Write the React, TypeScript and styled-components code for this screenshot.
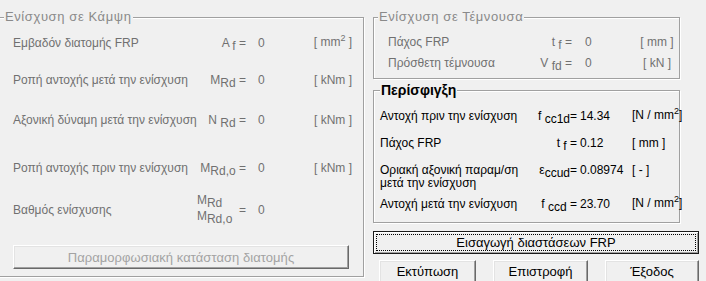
import React from "react";
import styled, { createGlobalStyle } from "styled-components";

const Global = createGlobalStyle`
  html, body { margin: 0; padding: 0; background: #f0f0f0; }
  body { font-family: "Liberation Sans", Arial, sans-serif; }
`;

const Window = styled.div`
  width: 706px;
  height: 281px;
  overflow: hidden;
  box-sizing: border-box;
  display: flex;
  align-items: flex-start;
  padding-top: 17px;
  background: #f0f0f0;
  font-family: "Liberation Sans", Arial, sans-serif;
  font-size: 12px;
`;

const Frame = styled.div<{ $w: number; $h: number; $ml?: number; $mt?: number; $pl: number }>`
  position: relative;
  box-sizing: border-box;
  flex: none;
  width: ${(p) => p.$w}px;
  height: ${(p) => p.$h}px;
  margin-left: ${(p) => p.$ml ?? 0}px;
  margin-top: ${(p) => p.$mt ?? 0}px;
  padding: 16px 0 0 ${(p) => p.$pl}px;
  border: 1px solid #a0a0a0;
  box-shadow: inset 1px 1px 0 #fff, 1px 1px 0 #fff;
  display: flex;
  flex-direction: column;
`;

const Caption = styled.span<{ $bold?: boolean; $left: number }>`
  position: absolute;
  left: ${(p) => p.$left}px;
  top: ${(p) => (p.$bold ? -9 : -8)}px;
  padding: 0 1px;
  background: #f0f0f0;
  white-space: nowrap;
  font-size: ${(p) => (p.$bold ? 14 : 13)}px;
  line-height: ${(p) => (p.$bold ? 16 : 14)}px;
  font-weight: ${(p) => (p.$bold ? 700 : 400)};
  letter-spacing: ${(p) => (p.$bold ? 0 : 0.6)}px;
  color: ${(p) => (p.$bold ? "#000" : "#8a8a8a")};
`;

const Row = styled.div<{ $cols: string; $mt?: number; $h?: number; $dim?: boolean; $top?: boolean }>`
  display: grid;
  grid-template-columns: ${(p) => p.$cols};
  align-items: ${(p) => (p.$top ? "start" : "center")};
  margin-top: ${(p) => p.$mt ?? 0}px;
  height: ${(p) => p.$h ?? 16}px;
  line-height: ${(p) => (p.$top ? 13 : 16)}px;
  white-space: nowrap;
  color: ${(p) => (p.$dim ? "#707070" : "#000")};
`;

const Label = styled.span``;

const Sym = styled.span`
  display: flex;
  justify-content: flex-end;
  align-items: center;
  white-space: pre;
`;

const Val = styled.span<{ $indent: number }>`
  padding-left: ${(p) => p.$indent}px;
`;

const Unit = styled.span<{ $center?: boolean }>`
  text-align: ${(p) => (p.$center ? "center" : "left")};
  white-space: pre;
`;

const Sub = styled.span`
  font-size: 12px;
  position: relative;
  top: 3px;
`;

const Sup = styled.span`
  font-size: 9px;
  position: relative;
  top: -5px;
`;

const Fraction = styled.span`
  display: inline-flex;
  flex-direction: column;
  line-height: 16px;
  margin-top: -4px;
`;

const RightCol = styled.div`
  flex: none;
  margin-left: 9px;
  width: 326px;
  display: flex;
  flex-direction: column;
`;

const DisabledButton = styled.div`
  box-sizing: border-box;
  margin-top: 19px;
  width: 336px;
  height: 24px;
  display: flex;
  align-items: center;
  justify-content: center;
  border: 1px solid;
  border-color: #fff #696969 #696969 #fff;
  box-shadow: inset -1px -1px 0 #a0a0a0, inset 1px 1px 0 #e3e3e3;
  color: #a3a3a3;
  font-size: 13px;
  letter-spacing: 0.05px;
  white-space: nowrap;
`;

const DefaultButton = styled.div`
  box-sizing: border-box;
  margin-top: 8px;
  width: 326px;
  height: 23px;
  padding: 2px;
  border: 1px solid #1a1a1a;
  box-shadow: inset 1px 1px 0 #fff, inset -1px -1px 0 #a0a0a0;
  display: flex;
`;

const FocusRect = styled.div`
  flex: 1;
  border: 1px dotted #000;
  display: flex;
  align-items: center;
  justify-content: center;
  font-size: 13px;
  color: #000;
  white-space: nowrap;
`;

const ButtonRow = styled.div`
  margin-top: 6px;
  padding-left: 6px;
  display: flex;
  gap: 17px;
`;

const PushButton = styled.div<{ $w: number }>`
  box-sizing: border-box;
  width: ${(p) => p.$w}px;
  height: 23px;
  display: flex;
  align-items: center;
  justify-content: center;
  border: 1px solid;
  border-color: #fff #696969 #696969 #fff;
  box-shadow: inset -1px -1px 0 #a0a0a0, inset 1px 1px 0 #e3e3e3;
  font-size: 13px;
  color: #000;
  white-space: nowrap;
`;

const LEFT_COLS = "182px 51px 59px 56px";
const SHEAR_COLS = "130px 54px 60px 50px";
const CONF_COLS = "152px 45px 55px auto";

export default function App() {
  return (
    <>
      <Global />
      <Window>
        <Frame $w={366} $h={260} $ml={-2} $pl={14}>
          <Caption $left={5}>Ενίσχυση σε Κάμψη</Caption>
          <Row $cols={LEFT_COLS} $dim>
            <Label>Εμβαδόν διατομής FRP</Label>
            <Sym>
              A <Sub>f</Sub> =
            </Sym>
            <Val $indent={12}>0</Val>
            <Unit $center>
              [ mm<Sup>2</Sup> ]
            </Unit>
          </Row>
          <Row $cols={LEFT_COLS} $dim $mt={22}>
            <Label>Ροπή αντοχής μετά την ενίσχυση</Label>
            <Sym>
              M<Sub>Rd</Sub> =
            </Sym>
            <Val $indent={12}>0</Val>
            <Unit $center>[ kNm ]</Unit>
          </Row>
          <Row $cols={LEFT_COLS} $dim $mt={24}>
            <Label>Αξονική δύναμη μετά την ενίσχυση</Label>
            <Sym>
              N <Sub>Rd</Sub> =
            </Sym>
            <Val $indent={12}>0</Val>
            <Unit $center>[ kNm ]</Unit>
          </Row>
          <Row $cols={LEFT_COLS} $dim $mt={32}>
            <Label>Ροπή αντοχής πριν την ενίσχυση</Label>
            <Sym>
              M<Sub>Rd,o</Sub> =
            </Sym>
            <Val $indent={12}>0</Val>
            <Unit $center>[ kNm ]</Unit>
          </Row>
          <Row $cols={LEFT_COLS} $dim $mt={18} $h={32}>
            <Label>Βαθμός ενίσχυσης</Label>
            <Sym>
              <Fraction>
                <span>
                  M<Sub>Rd</Sub>
                </span>
                <span>
                  M<Sub>Rd,o</Sub>
                </span>
              </Fraction>
              {"  ="}
            </Sym>
            <Val $indent={12}>0</Val>
            <Unit $center />
          </Row>
          <DisabledButton>Παραμορφωσιακή κατάσταση διατομής</DisabledButton>
        </Frame>

        <RightCol>
          <Frame $w={307} $h={62} $pl={14}>
            <Caption $left={4}>Ενίσχυση σε Τέμνουσα</Caption>
            <Row $cols={SHEAR_COLS} $dim>
              <Label>Πάχος FRP</Label>
              <Sym>
                t <Sub>f</Sub> =
              </Sym>
              <Val $indent={13}>0</Val>
              <Unit $center>[ mm ]</Unit>
            </Row>
            <Row $cols={SHEAR_COLS} $dim $mt={5}>
              <Label>Πρόσθετη τέμνουσα</Label>
              <Sym>
                V <Sub>fd</Sub> =
              </Sym>
              <Val $indent={13}>0</Val>
              <Unit $center>[ kN ]</Unit>
            </Row>
          </Frame>

          <Frame $w={307} $h={133} $mt={11} $pl={6}>
            <Caption $bold $left={6}>
              Περίσφιγξη
            </Caption>
            <Row $cols={CONF_COLS}>
              <Label>Αντοχή πριν την ενίσχυση</Label>
              <Sym>
                f <Sub>cc1d</Sub>=
              </Sym>
              <Val $indent={3}>14.34</Val>
              <Unit>
                [N / mm<Sup>2</Sup>]
              </Unit>
            </Row>
            <Row $cols={CONF_COLS} $mt={12}>
              <Label>Πάχος FRP</Label>
              <Sym>
                t <Sub>f</Sub> =
              </Sym>
              <Val $indent={3}>0.12</Val>
              <Unit>[ mm ]</Unit>
            </Row>
            <Row $cols={CONF_COLS} $mt={13} $h={26} $top>
              <Label>
                Οριακή αξονική παραμ/ση
                <br />
                μετά την ενίσχυση
              </Label>
              <Sym>
                ε<Sub>ccud</Sub>=
              </Sym>
              <Val $indent={3}>0.08974</Val>
              <Unit>[ - ]</Unit>
            </Row>
            <Row $cols={CONF_COLS} $mt={5}>
              <Label>Αντοχή μετά την ενίσχυση</Label>
              <Sym>
                f <Sub>ccd</Sub> =
              </Sym>
              <Val $indent={3}>23.70</Val>
              <Unit>
                [N / mm<Sup>2</Sup>]
              </Unit>
            </Row>
          </Frame>

          <DefaultButton>
            <FocusRect>Εισαγωγή διαστάσεων FRP</FocusRect>
          </DefaultButton>

          <ButtonRow>
            <PushButton $w={97}>Εκτύπωση</PushButton>
            <PushButton $w={95}>Επιστροφή</PushButton>
            <PushButton $w={94}>Έξοδος</PushButton>
          </ButtonRow>
        </RightCol>
      </Window>
    </>
  );
}
